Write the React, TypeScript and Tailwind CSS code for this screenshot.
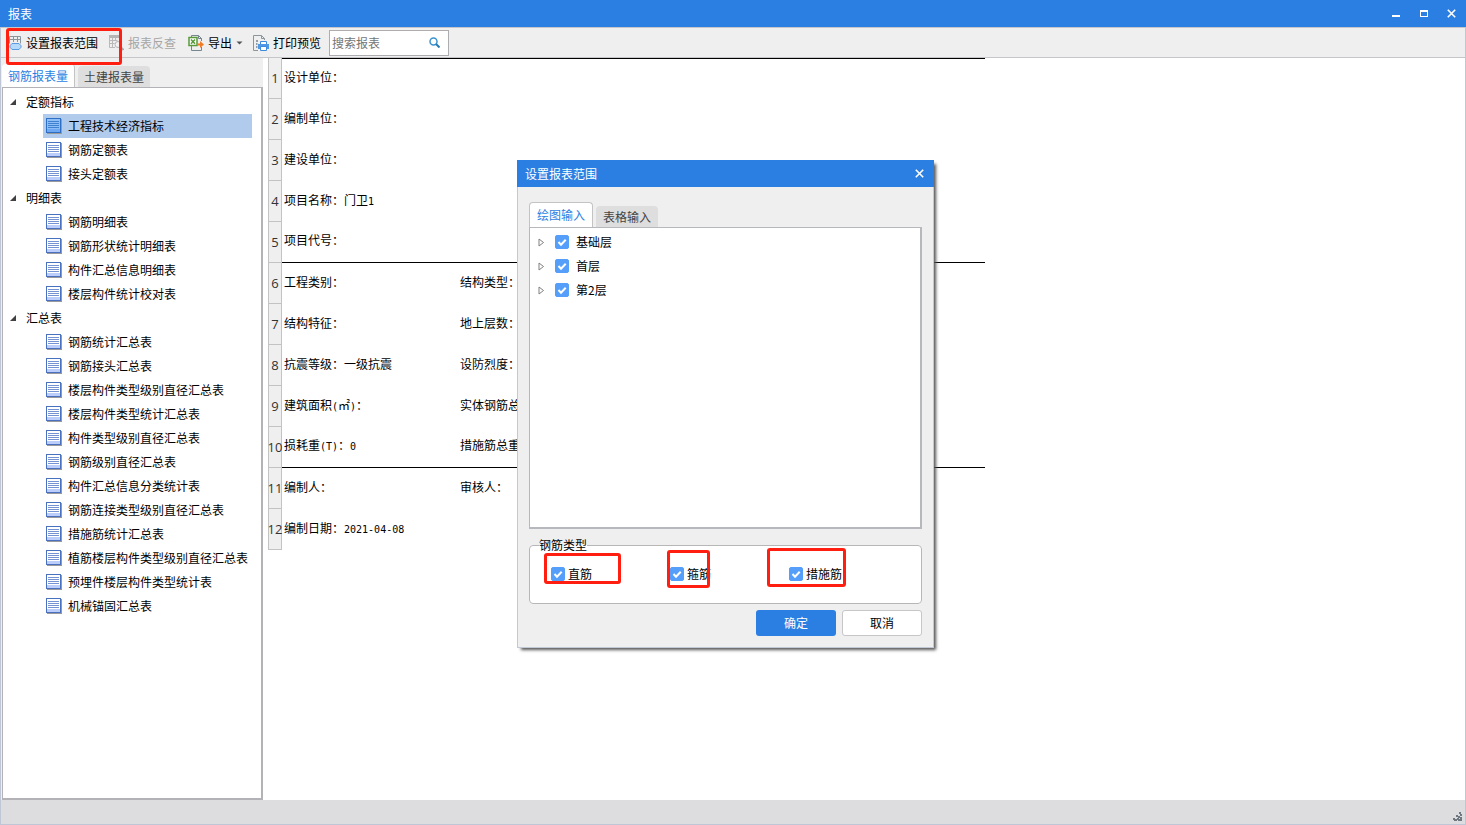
import { ReactNode } from "react";

const groups = [
  { name: "定额指标", items: ["工程技术经济指标", "钢筋定额表", "接头定额表"] },
  {
    name: "明细表",
    items: ["钢筋明细表", "钢筋形状统计明细表", "构件汇总信息明细表", "楼层构件统计校对表"],
  },
  {
    name: "汇总表",
    items: [
      "钢筋统计汇总表",
      "钢筋接头汇总表",
      "楼层构件类型级别直径汇总表",
      "楼层构件类型统计汇总表",
      "构件类型级别直径汇总表",
      "钢筋级别直径汇总表",
      "构件汇总信息分类统计表",
      "钢筋连接类型级别直径汇总表",
      "措施筋统计汇总表",
      "植筋楼层构件类型级别直径汇总表",
      "预埋件楼层构件类型统计表",
      "机械锚固汇总表",
    ],
  },
];

const rows: [string, string][] = [
  ["设计单位：", ""],
  ["编制单位：", ""],
  ["建设单位：", ""],
  ["项目名称：门卫1", ""],
  ["项目代号：", ""],
  ["工程类别：", "结构类型："],
  ["结构特征：", "地上层数："],
  ["抗震等级：一级抗震", "设防烈度："],
  ["建筑面积(㎡)：", "实体钢筋总重："],
  ["损耗重(T)：0", "措施筋总重："],
  ["编制人：", "审核人："],
  ["编制日期：2021-04-08", ""],
];

function ReportText({ text }: { text: string }) {
  return (
    <>
      {text.split(/([\x20-\x7e]+)/).map((part, i) =>
        i % 2 ? (
          <span key={i} className="font-['DejaVu_Sans_Mono',monospace] text-[10px] leading-none">
            {part}
          </span>
        ) : (
          part
        )
      )}
    </>
  );
}

function ReportIcon({ selected }: { selected: boolean }) {
  return (
    <svg width="16" height="16" viewBox="0 0 16 16" shapeRendering="crispEdges" className="mr-px shrink-0">
      <path d="M1 1h15v15H1z" fill="#9a9a9a" />
      <path d="M0 0h15v15H0z" fill={selected ? "#2c6fc4" : "#4a70c0"} />
      <path d="M1 1h13v13H1z" fill={selected ? "#8fbdf5" : "#fff"} />
      <path d="M1 11h13v3H1z" fill={selected ? "#6ea8f2" : "#bccdfa"} />
      <path d="M2 3h11v1H2zM2 5h11v1H2zM2 7h11v1H2zM2 9h11v1H2z" fill={selected ? "#3f80d0" : "#7592d2"} />
    </svg>
  );
}

function RangeIcon() {
  return (
    <svg width="13" height="16" viewBox="0 0 13 16" fill="none" className="shrink-0">
      <path d="M.5 8.5v-7h11v7M.5 4.5h11M4.5 1v6M8.5 1v6" stroke="#8b969c" />
      <path d="M3 8.500h7l2 2.200v1.600l-2 2.200H3l-2-2.200v-1.600z" fill="#b8dafa" stroke="#5b9ae0" strokeLinejoin="round" />
    </svg>
  );
}

function LookupIcon() {
  return (
    <svg width="15" height="16" viewBox="0 0 15 16" fill="none" className="shrink-0">
      <path d="M0 0h11v3H0z" fill="#b5b5b5" />
      <path d="M.5.5v12H6M10.500 3v3M.5 5.500h8M.5 8.500h5M3.500 3v9M6.500 3v3" stroke="#b9b9b9" />
      <circle cx="9" cy="9.500" r="3" fill="#f2f2f2" stroke="#b5b5b5" />
      <path d="m11.500 12 3 3" stroke="#aaa" strokeWidth="2" />
    </svg>
  );
}

function ExportIcon() {
  return (
    <svg width="16" height="16" viewBox="0 0 16 16" fill="none" className="shrink-0">
      <path d="M3.500 2V.5h7l3 3V6M13.500 12v3.500h-10V11M10.500.5v3h3" stroke="#77858e" />
      <path d="M1 2.500h8v8H1z" fill="#fff" stroke="#58993a" strokeWidth="1.500" />
      <path d="m3 4.500 4 4.200M7 4.500 3 8.700" stroke="#58993a" strokeWidth="1.500" />
      <path d="M9 8.500h3V6l4 3.500-4 3.500v-2.500H9z" fill="#f27b26" />
    </svg>
  );
}

function PrintIcon() {
  return (
    <svg width="16" height="16" viewBox="0 0 16 16" fill="none" className="shrink-0">
      <path d="M5 15.500H.5V.5h8l3 3V5M8.500.5v3h3" stroke="#8b969c" />
      <path d="M3 6h2M3 9h1.500M3 12h1.500" stroke="#77858e" strokeWidth="1.500" />
      <path d="M7.500 9V6.500h6V9" fill="#fff" stroke="#3c8be0" />
      <path d="M5 9h11v5H5z" fill="#4f98e6" />
      <path d="M7.500 11.500h6v4h-6z" fill="#fff" stroke="#3c8be0" />
    </svg>
  );
}

function Check({ children, gap }: { children: ReactNode; gap: string }) {
  return (
    <label className={`flex items-center ${gap}`}>
      <span className="grid size-3.5 shrink-0">
        <input
          type="checkbox"
          defaultChecked
          className="peer col-start-1 row-start-1 size-3.5 appearance-none rounded-[2px] border border-[#aaa] bg-white checked:border-[#559ffb] checked:bg-[#559ffb]"
        />
        <svg
          viewBox="0 0 14 14"
          className="pointer-events-none invisible col-start-1 row-start-1 size-3.5 peer-checked:visible"
        >
          <path d="m3.500 7 2.500 2.700 4.700-4.900" fill="none" stroke="#fff" strokeWidth="2" />
        </svg>
      </span>
      {children}
    </label>
  );
}

function RangeDialog() {
  return (
    <section
      role="dialog"
      aria-label="设置报表范围"
      className="absolute top-[160px] left-[517px] flex h-[488px] w-[417px] flex-col bg-[#efefef] shadow-[3px_3px_3px_-1px_#555]"
    >
      <header className="flex h-[27px] shrink-0 items-center justify-between bg-[#2c7fe2] pr-2.5 pl-2 text-white">
        <h2>设置报表范围</h2>
        <button type="button" aria-label="关闭">
          <svg width="9" height="9" viewBox="0 0 9 9">
            <path d="m.8.8 7.400 7.400M8.200.8.8 8.200" stroke="#fff" strokeWidth="1.600" />
          </svg>
        </button>
      </header>
      <div className="flex grow flex-col border border-t-0 border-[#c2c9d6] pt-[15px] pr-[11px] pl-[11px]">
        <div role="tablist" className="flex items-end gap-[3px]">
          <button
            type="button"
            role="tab"
            aria-selected="true"
            className="h-[25px] rounded-t border border-b-0 border-[#c3c3c3] bg-white px-[7px] text-[#2c7fe2]"
          >
            绘图输入
          </button>
          <button type="button" role="tab" aria-selected="false" className="h-[21px] rounded-t bg-[#dedede] px-[7px] text-[#444]">
            表格输入
          </button>
        </div>
        <ul className="h-[302px] border border-r-2 border-b-2 border-[#b7b8bd] bg-white pt-0.5">
          {["基础层", "首层", "第2层"].map((n) => (
            <li key={n} className="flex h-6 items-center gap-2.5 pl-2">
              <svg width="7" height="9" viewBox="0 0 7 9">
                <path d="M1 1v7l4.500-3.500z" fill="#fff" stroke="#808080" />
              </svg>
              <Check gap="gap-[7px]">{n}</Check>
            </li>
          ))}
        </ul>
        <fieldset className="mt-[7px] h-[68px] rounded border border-[#b7b7b7] bg-white pl-[21px]">
          <legend className="-ml-3 h-[18px] leading-[18px]">钢筋类型</legend>
          <div className="grid grid-cols-[119px_119px_1fr] pt-3">
            <Check gap="gap-[3px]">直筋</Check>
            <Check gap="gap-[3px]">箍筋</Check>
            <Check gap="gap-[3px]">措施筋</Check>
          </div>
        </fieldset>
        <div className="flex justify-end gap-1.5 pt-1.5">
          <button type="button" className="h-[26px] w-20 rounded-[3px] bg-[#2c7fe2] text-white">
            确定
          </button>
          <button type="button" className="h-[26px] w-20 rounded-[3px] border border-[#c6c6c6] bg-white">
            取消
          </button>
        </div>
      </div>
      <span className="pointer-events-none absolute top-[393px] left-[27px] h-[31px] w-[77px] rounded-[3px] border-3 border-[#ff1e10]" />
      <span className="pointer-events-none absolute top-[390px] left-[150px] h-[38px] w-[43px] rounded-[3px] border-3 border-[#ff1e10]" />
      <span className="pointer-events-none absolute top-[388px] left-[250px] h-[39px] w-[79px] rounded-[3px] border-3 border-[#ff1e10]" />
    </section>
  );
}

export default function App() {
  return (
    <div className="relative flex min-h-screen flex-col bg-white font-['Noto_Sans_CJK_SC',sans-serif] text-[12px] leading-4 text-black">
      <header className="flex h-[27px] items-center justify-between bg-[#2c7fe2] pr-2.5 pl-2 text-white">
        <h1>报表</h1>
        <div className="flex items-center gap-[19px]">
          <button type="button" aria-label="最小化">
            <svg width="9" height="9" viewBox="0 0 9 9" shapeRendering="crispEdges">
              <path d="M1 6h8v2H1z" fill="#fff" />
            </svg>
          </button>
          <button type="button" aria-label="最大化">
            <svg width="9" height="9" viewBox="0 0 9 9" shapeRendering="crispEdges">
              <path d="M1 1h8v7H1zM2 3v4h6V3z" fill="#fff" fillRule="evenodd" />
            </svg>
          </button>
          <button type="button" aria-label="关闭">
            <svg width="9" height="9" viewBox="0 0 9 9">
              <path d="m.8.8 7.400 7.400M8.200.8.8 8.200" stroke="#fff" strokeWidth="1.600" />
            </svg>
          </button>
        </div>
      </header>

      <div className="flex grow flex-col border-x border-b border-[#bfc7d7]">
        <nav className="flex h-[31px] items-center border-y border-[#c6c6c8] bg-[#efefef] pl-2">
          <button type="button" className="flex items-center gap-1">
            <RangeIcon />
            设置报表范围
          </button>
          <button type="button" disabled className="ml-[11px] flex items-center gap-1 text-[#a6a6a6]">
            <LookupIcon />
            报表反查
          </button>
          <button type="button" className="ml-3 flex items-center gap-1">
            <ExportIcon />
            导出
            <svg width="7" height="4" viewBox="0 0 7 4">
              <path d="M.5.500h6l-3 3z" fill="#555" />
            </svg>
          </button>
          <button type="button" className="ml-2.5 flex items-center gap-1">
            <PrintIcon />
            打印预览
          </button>
          <label className="ml-2 flex h-[26px] w-[120px] items-center border border-[#adadb0] bg-white pr-2 pl-0.5">
            <input
              type="text"
              aria-label="搜索报表"
              placeholder="搜索报表"
              className="w-full min-w-0 outline-none placeholder:text-[#757575]"
            />
            <svg width="11" height="11" viewBox="0 0 11 11" fill="none" className="shrink-0">
              <circle cx="4.500" cy="4.500" r="3.500" stroke="#3c93cf" strokeWidth="1.500" />
              <path d="m7 7 3.500 3.500" stroke="#2a7ab5" strokeWidth="2" />
            </svg>
          </label>
        </nav>

        <main className="flex grow">
          <aside className="flex w-[262px] shrink-0 flex-col bg-[#efefef] pl-px">
            <div role="tablist" className="flex h-[29px] items-end gap-[3px]">
              <button
                type="button"
                role="tab"
                aria-selected="true"
                className="h-[23px] rounded-t border-r border-[#c3c3c3] bg-white px-1.5 text-[#2c7fe2]"
              >
                钢筋报表量
              </button>
              <button type="button" role="tab" aria-selected="false" className="h-[21px] rounded-t bg-[#dedede] px-1.5 text-[#444]">
                土建报表量
              </button>
            </div>
            <div className="grow border border-r-2 border-b-2 border-[#b3b3b7] bg-white pt-0.5">
              {groups.map((g, gi) => (
                <section key={g.name}>
                  <h3 className="flex h-6 items-center gap-2.5 pl-[7px]">
                    <svg width="6" height="6" viewBox="0 0 6 6">
                      <path d="M6 0v6H0z" fill="#404040" />
                    </svg>
                    {g.name}
                  </h3>
                  <ul className="pr-[9px] pl-10">
                    {g.items.map((name, i) => {
                      const selected = gi === 0 && i === 0;
                      return (
                        <li key={name} className={selected ? "bg-[#b1cbed]" : ""}>
                          <a href="#" className="flex h-6 items-center gap-[5px] pl-[3px] whitespace-nowrap">
                            <ReportIcon selected={selected} />
                            {name}
                          </a>
                        </li>
                      );
                    })}
                  </ul>
                </section>
              ))}
            </div>
          </aside>

          <div className="pl-[5px]">
            <table className="w-[717px] table-fixed border-separate border-spacing-0">
              <colgroup>
                <col className="w-3.5" />
                <col className="w-44" />
                <col />
              </colgroup>
              <tbody>
                {rows.map(([a, b], i) => {
                  const line = i === 4 || i === 9 ? "border-b border-black" : i === 0 ? "border-t border-black" : "";
                  return (
                    <tr key={a} className="h-[41px]">
                      <th
                        scope="row"
                        className="border-x border-b border-[#c3c3c3] bg-[#efefef] p-0 font-['Open_Sans',sans-serif] text-[13px] font-normal text-[#333]"
                      >
                        <span className="flex justify-center">{i + 1}</span>
                      </th>
                      <td className={`p-0 pb-1 pl-0.5 ${line}`}>
                        <ReportText text={a} />
                      </td>
                      <td className={`p-0 pb-1 pl-0.5 ${line}`}>
                        <ReportText text={b} />
                      </td>
                    </tr>
                  );
                })}
              </tbody>
            </table>
          </div>
        </main>

        <footer className="flex h-6 items-end justify-end bg-[#dddddf] pr-[3px] pb-[3px]">
          <svg width="9" height="9" viewBox="0 0 9 9" fill="#6f7880" shapeRendering="crispEdges">
            <path d="M6 0h2v2H6zM7 2h2v2H7zM3 3h2v2H3zM5 4h2v2H5zM7 5h2v2H7zM0 6h2v2H0zM4 6h2v2H4zM1 7h3v2H1zM5 7h2v2H5zM7 7h2v2H7z" />
          </svg>
        </footer>
      </div>

      <span className="pointer-events-none absolute top-7 left-1.5 h-[37px] w-[116px] rounded-[3px] border-3 border-[#ff1e10]" />
      <RangeDialog />
    </div>
  );
}
